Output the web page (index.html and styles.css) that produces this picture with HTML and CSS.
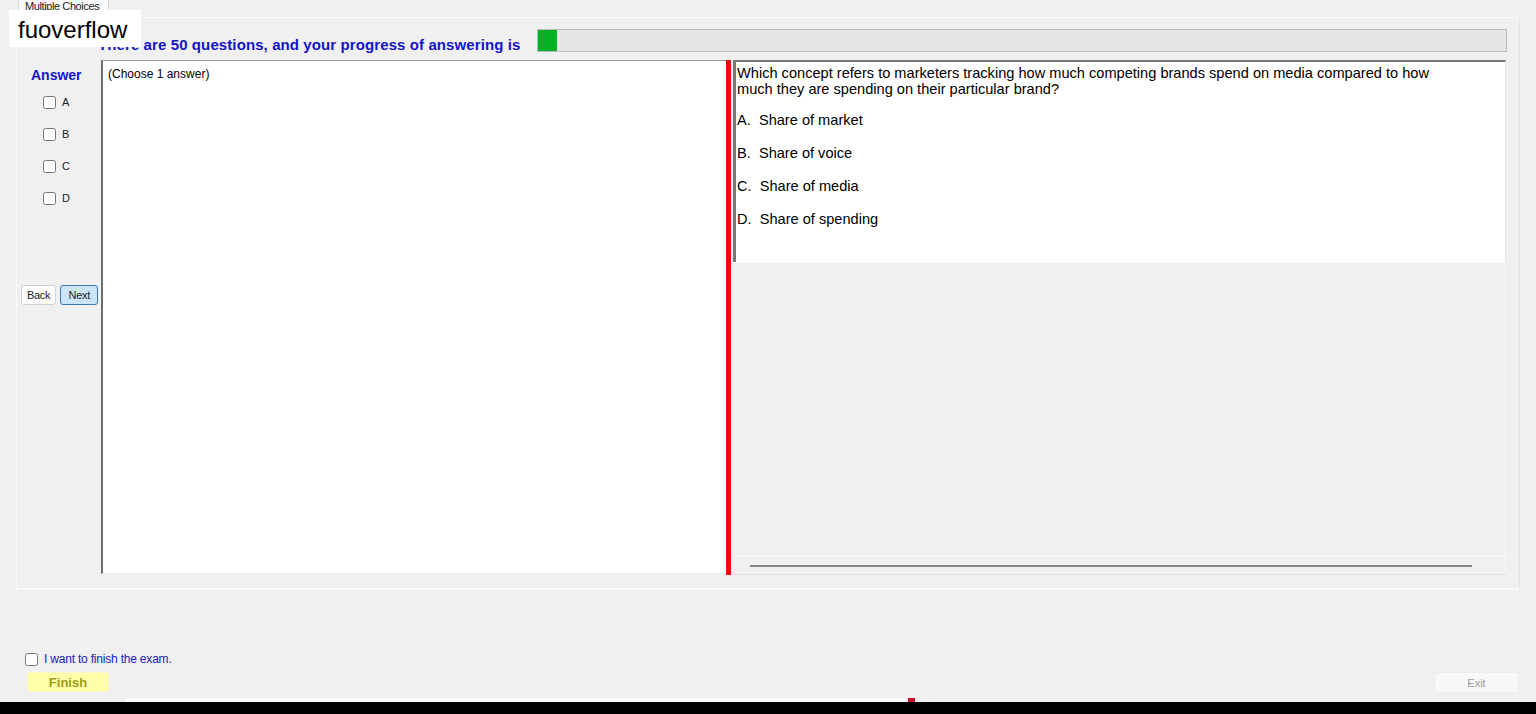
FILE: index.html
```html
<!DOCTYPE html>
<html lang="en">
<head>
  <meta charset="UTF-8" />
  <meta name="viewport" content="width=device-width, initial-scale=1.0"/>
  <title>Multiple Choices</title>
  <link rel="stylesheet" href="styles.css">
</head>
<body>
  <div class="window">
    <div class="tab-strip">
      <div class="tab">Multiple Choices</div>
    </div>

    <div class="tab-page">
      <div class="progress-row">
        <span class="progress-title">There are 50 questions, and your progress of answering is</span>
        <div class="progress-bar"><div class="progress-fill" style="width: 2%"></div></div>
      </div>

      <div class="content">
        <div class="answer-col">
          <div class="answer-title">Answer</div>
          <label class="choice"><input type="checkbox"> A</label>
          <label class="choice"><input type="checkbox"> B</label>
          <label class="choice"><input type="checkbox"> C</label>
          <label class="choice"><input type="checkbox"> D</label>
          <div class="nav-buttons">
            <button class="btn">Back</button>
            <button class="btn btn-active">Next</button>
          </div>
        </div>

        <div class="hint-box">(Choose 1 answer)</div>
        <div class="splitter"></div>

        <div class="question-panel">
          <div class="question-box">
            <p class="question">Which concept refers to marketers tracking how much competing brands spend on media compared to how much they are spending on their particular brand?</p>
            <div class="options">
              <p class="option">A.&nbsp; Share of market</p>
              <p class="option">B.&nbsp; Share of voice</p>
              <p class="option">C.&nbsp; Share of media</p>
              <p class="option">D.&nbsp; Share of spending</p>
            </div>
          </div>
          <div class="question-empty"></div>
          <div class="hscroll"><div class="hscroll-thumb"></div></div>
        </div>
      </div>
    </div>

    <div class="footer">
      <label class="finish-check"><input type="checkbox"> I want to finish the exam.</label>
      <div class="footer-buttons">
        <button class="btn-finish">Finish</button>
        <button class="btn-exit">Exit</button>
      </div>
    </div>

    <div class="taskbar">
      <div class="taskbar-strip"><span class="taskbar-mark"></span></div>
    </div>
  </div>

  <div class="watermark">fuoverflow</div>
</body>
</html>
```

FILE: styles.css
```css
* {
  box-sizing: border-box;
}
body {
  margin: 0;
  background: #f0f0f0;
  font-family: "Liberation Sans", Arial, sans-serif;
  color: #000;
  overflow: hidden;
}
.window {
  height: 714px;
  display: flex;
  flex-direction: column;
}
.tab-strip {
  height: 17px;
  padding-left: 18px;
}
.tab {
  width: 91px;
  height: 14px;
  padding-left: 6px;
  background: #fafafa;
  border: 1px solid #d9d9d9;
  border-top: none;
  font-size: 11px;
  line-height: 12px;
  letter-spacing: -0.4px;
  color: #222;
  white-space: nowrap;
}
.tab-page {
  margin: 0 16px;
  height: 573px;
  border: 1px solid #fafafa;
  border-right-color: #e3e3e3;
  border-bottom: 2px solid #fafafa;
  display: flex;
  flex-direction: column;
}
.progress-row {
  height: 42px;
  display: flex;
  align-items: flex-start;
  padding-left: 81px;
}
.progress-title {
  margin-top: 18px;
  font-size: 15px;
  font-weight: bold;
  color: #1414c8;
  letter-spacing: 0.1px;
  width: 439px;
  white-space: nowrap;
}
.progress-bar {
  margin-top: 11px;
  width: 970px;
  height: 23px;
  background: #e6e6e6;
  border: 1px solid #bcbcbc;
  display: flex;
}
.progress-fill {
  background: #06b025;
  height: 100%;
}
.content {
  display: flex;
  height: 515px;
}
.answer-col {
  width: 84px;
  display: flex;
  flex-direction: column;
}
.answer-title {
  font-size: 14px;
  font-weight: bold;
  color: #1414c8;
  margin: 7px 0 0 14px;
  height: 19px;
}
.choice {
  display: flex;
  align-items: center;
  height: 32px;
  margin-left: 25px;
  font-size: 11px;
  color: #222;
}
.choice input {
  width: 13px;
  height: 13px;
  margin: 0 6px 0 1px;
}
.nav-buttons {
  display: flex;
  gap: 4px;
  margin: 71px 0 0 4px;
}
.btn {
  height: 20px;
  padding: 0 5px;
  font-family: inherit;
  font-size: 11px;
  letter-spacing: -0.3px;
  background: #fdfdfd;
  border: 1px solid #d0d0d0;
  border-radius: 3px;
  color: #222;
}
.btn-active {
  background: #cce4f7;
  border-color: #3c78b4;
  width: 38px;
}
.hint-box {
  width: 625px;
  height: 514px;
  background: #fff;
  border-top: 1px solid #9a9a9a;
  border-left: 2px solid #6d6d6d;
  border-bottom: 1px solid #e8e8e8;
  padding: 6px 0 0 5px;
  font-size: 12px;
}
.splitter {
  width: 5px;
  background: #e41010;
  margin-right: 2px;
}
.question-panel {
  width: 773px;
  display: flex;
  flex-direction: column;
}
.question-box {
  height: 202px;
  background: #fff;
  border-top: 2px solid #777;
  border-left: 3px solid #777;
  border-right: 1px solid #e8e8e8;
  padding: 3px 0 0 1px;
}
.question {
  margin: 0;
  font-size: 14.6px;
  line-height: 16px;
  width: 712px;
}
.options {
  margin-top: 7px;
}
.option {
  margin: 0;
  font-size: 14.6px;
  line-height: 33px;
}
.question-empty {
  flex: 1;
  border-top: 1px solid #fafafa;
  border-right: 1px solid #fafafa;
}
.hscroll {
  height: 19px;
  border-top: 1px solid #fafafa;
  border-bottom: 1px solid #e0e0e0;
  border-right: 1px solid #fafafa;
  display: flex;
  align-items: center;
  padding-left: 17px;
}
.hscroll-thumb {
  width: 722px;
  height: 2px;
  background: #858585;
}
.footer {
  flex: 1;
  display: flex;
  flex-direction: column;
  padding: 62px 17px 0 25px;
}
.finish-check {
  display: flex;
  align-items: center;
  font-size: 12px;
  color: #2020c0;
  letter-spacing: -0.2px;
}
.finish-check input {
  width: 13px;
  height: 13px;
  margin: 0 6px 0 0;
}
.footer-buttons {
  display: flex;
  justify-content: space-between;
  align-items: flex-start;
  margin-top: 6px;
  padding-left: 2px;
}
.btn-finish {
  width: 82px;
  height: 20px;
  background: #ffffaa;
  border: 1px solid #f8f8c8;
  border-radius: 3px;
  font-family: inherit;
  font-size: 13px;
  font-weight: bold;
  color: #9a9c1e;
}
.btn-exit {
  width: 85px;
  height: 21px;
  background: #f8f8f8;
  border: 1px solid #ececec;
  border-radius: 3px;
  font-family: inherit;
  font-size: 11px;
  color: #9a9a9a;
}
.taskbar {
  height: 12px;
  background: #000;
  position: relative;
}
.taskbar-strip {
  position: absolute;
  left: 125px;
  top: -4px;
  width: 780px;
  height: 4px;
  background: #fff;
}
.taskbar-mark {
  position: absolute;
  left: 783px;
  top: 0;
  width: 7px;
  height: 4px;
  background: #c0102a;
}
.watermark {
  position: absolute;
  left: 9px;
  top: 10px;
  width: 132px;
  height: 37px;
  padding-left: 9px;
  background: #fff;
  font-family: "Liberation Sans", Arial, sans-serif;
  font-size: 24px;
  line-height: 40px;
  color: #000;
}
```
